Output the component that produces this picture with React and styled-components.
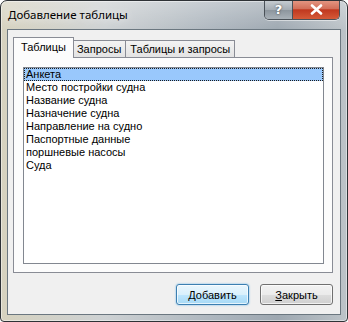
import styled, { createGlobalStyle } from "styled-components";

const GlobalStyle = createGlobalStyle`
  html, body {
    margin: 0;
    padding: 0;
    background: #ffffff;
  }
`;

const items = [
  "Анкета",
  "Место постройки судна",
  "Название судна",
  "Назначение судна",
  "Направление на судно",
  "Паспортные данные",
  "поршневые насосы",
  "Суда",
];

const tabs = ["Таблицы", "Запросы", "Таблицы и запросы"];

export default function App() {
  return (
    <>
      <GlobalStyle />
      <Window>
        <TitleBar>
          <Title>Добавление таблицы</Title>
          <Caption>
            <HelpButton>?</HelpButton>
            <CloseButton>
              <svg width="13" height="11" viewBox="0 0 13 11">
                <path
                  d="M2 1.5 L11 9.5 M11 1.5 L2 9.5"
                  stroke="#ffffff"
                  strokeWidth="2.6"
                  strokeLinecap="round"
                />
              </svg>
            </CloseButton>
          </Caption>
        </TitleBar>
        <Client>
          <TabStrip>
            {tabs.map((t, i) => (
              <Tab key={t} $active={i === 0}>
                {t}
              </Tab>
            ))}
          </TabStrip>
          <Panel>
            <ListBox>
              {items.map((item, i) => (
                <ListItem key={item} $selected={i === 0}>
                  {item}
                </ListItem>
              ))}
            </ListBox>
          </Panel>
          <ButtonRow>
            <Button $default>Добавить</Button>
            <Button>
              <u>З</u>акрыть
            </Button>
          </ButtonRow>
        </Client>
      </Window>
    </>
  );
}

const uiFont = `"Liberation Sans", Arial, sans-serif`;

const Window = styled.div`
  box-sizing: border-box;
  width: 348px;
  height: 322px;
  border: 1px solid #2e3236;
  border-radius: 7px 7px 4px 4px;
  padding: 0 6px 6px 6px;
  display: flex;
  flex-direction: column;
  background:
    linear-gradient(to bottom, rgba(255, 255, 255, 0.3), rgba(255, 255, 255, 0) 30px),
    linear-gradient(to right, #d6d2bf 0%, #cdd1d3 30%, #adb6be 62%, #9ea8b1 80%, #bcc3c8 100%);
  box-shadow: inset 0 0 0 1px rgba(255, 255, 255, 0.45);
  overflow: hidden;
`;

const TitleBar = styled.div`
  height: 28px;
  display: flex;
  align-items: flex-start;
  justify-content: space-between;
`;

const Title = styled.div`
  font-family: "Noto Sans", "Open Sans", sans-serif;
  font-size: 11.5px;
  color: #000000;
  padding: 6px 0 0 1px;
  text-shadow: 0 0 8px rgba(255, 255, 255, 0.9);
`;

const Caption = styled.div`
  display: flex;
  margin-top: -1px;
  margin-right: 1px;
  border: 1px solid #4a5158;
  border-top: none;
  border-radius: 0 0 5px 5px;
  overflow: hidden;
  box-shadow: 0 1px 0 rgba(255, 255, 255, 0.5);
`;

const HelpButton = styled.div`
  width: 27px;
  height: 19px;
  display: flex;
  align-items: center;
  justify-content: center;
  font-family: "DejaVu Sans", sans-serif;
  font-weight: bold;
  font-size: 13px;
  color: #ffffff;
  text-shadow: 0 0 2px #333;
  border-right: 1px solid #4a5158;
  background: linear-gradient(to bottom, #c9cfd4 0%, #a5adb4 50%, #8d969e 55%, #a9b1b8 100%);
`;

const CloseButton = styled.div`
  width: 46px;
  height: 19px;
  display: flex;
  align-items: center;
  justify-content: center;
  background: linear-gradient(to bottom, #e59a86 0%, #d2705a 45%, #c0381f 52%, #d55a38 100%);
`;

const Client = styled.div`
  flex: 1;
  border: 1px solid #6b7780;
  background: #f0f0f0;
  display: flex;
  flex-direction: column;
  padding: 7px 7px 0 5px;
`;

const TabStrip = styled.div`
  display: flex;
  align-items: flex-end;
  padding-left: 2px;
  height: 20px;
  position: relative;
  z-index: 1;
`;

const Tab = styled.div`
  box-sizing: border-box;
  font-family: ${uiFont};
  font-size: 11px;
  color: #000000;
  border: 1px solid #898c95;
  border-bottom: none;
  display: flex;
  align-items: center;
  height: ${(p) => (p.$active ? "21px" : "17px")};
  margin-bottom: ${(p) => (p.$active ? "-1px" : "0")};
  background: ${(p) =>
    p.$active ? "#fcfcfc" : "linear-gradient(to bottom, #f3f3f3, #e3e3e3)"};
  padding: ${(p) => (p.$active ? "0 7px 2px 7px" : "0 4px")};
  margin-left: ${(p) => (p.$active ? "-2px" : "-1px")};
  margin-right: ${(p) => (p.$active ? "-1px" : "0")};
  ${(p) => p.$active && "position: relative; z-index: 2;"}
`;

const Panel = styled.div`
  height: 216px;
  box-sizing: border-box;
  border: 1px solid #898c95;
  background: #fcfcfc;
  padding: 9px 8px 8px 9px;
  display: flex;
`;

const ListBox = styled.div`
  flex: 1;
  border: 1px solid #828790;
  background: #ffffff;
  font-family: ${uiFont};
  font-size: 11px;
  color: #000000;
`;

const ListItem = styled.div`
  height: 13px;
  line-height: 13px;
  padding-left: 2px;
  white-space: nowrap;
  background: ${(p) => (p.$selected ? "#99c8fc" : "transparent")};
  outline: ${(p) => (p.$selected ? "1px dotted #1b1b1b" : "none")};
  outline-offset: -1px;
`;

const ButtonRow = styled.div`
  display: flex;
  justify-content: flex-end;
  gap: 11px;
  padding: 11px 0 0 0;
`;

const Button = styled.div`
  box-sizing: border-box;
  width: 73px;
  height: 21px;
  display: flex;
  align-items: center;
  justify-content: center;
  font-family: ${uiFont};
  font-size: 11px;
  color: #000000;
  border-radius: 3px;
  border: 1px solid ${(p) => (p.$default ? "#3c7fb1" : "#707070")};
  background: ${(p) =>
    p.$default
      ? "linear-gradient(to bottom, #eaf6fd 0%, #d9f0fc 50%, #bee6fd 52%, #a7d9f5 100%)"
      : "linear-gradient(to bottom, #f2f2f2 0%, #ebebeb 50%, #dddddd 52%, #cfcfcf 100%)"};
  box-shadow: inset 0 0 0 1px rgba(255, 255, 255, 0.7)
    ${(p) => (p.$default ? ", 0 0 2px #5fb0e6" : "")};
`;
